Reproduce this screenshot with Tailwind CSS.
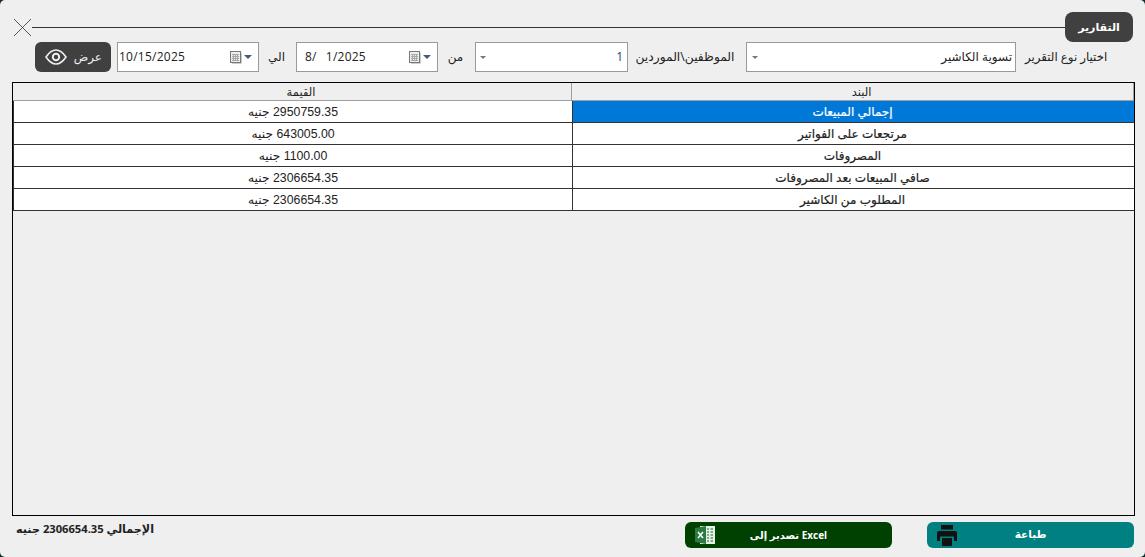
<!DOCTYPE html>
<html lang="ar">
<head>
    <meta charset="UTF-8">
    <title>التقارير</title>
    <script src="https://cdn.jsdelivr.net/npm/@tailwindcss/browser@4"></script>
</head>
<body class="overflow-hidden bg-[#0b2a2a]">
<div class="w-[1145px] h-[557px] rounded-[5px] bg-[#efefef] flex flex-col pt-3 font-['Open_Sans','DejaVu_Sans',sans-serif] text-[#222]">

    <!-- title -->
    <div class="h-[30px] flex items-start pl-[13px] pr-3">
        <svg class="w-[19px] h-[19px] mt-[6px] shrink-0" viewBox="0 0 19 19" fill="none" stroke="#444" stroke-width="0.9"><path d="M1 1 L18 18 M18 1 L1 18"/></svg>
        <div class="flex-1 h-px mt-[15px] bg-[#333]"></div>
        <div dir="rtl" class="w-[68px] h-[30px] rounded-lg bg-[#404040] text-white text-[11px] font-bold flex items-center justify-center">التقارير</div>
    </div>

    <!-- filters -->
    <div class="h-[30px] flex items-center pl-[35px] text-[12px]">
        <button dir="rtl" class="w-[76px] h-[30px] rounded-md bg-[#404040] text-[#eee] text-[12px] flex items-center justify-between pr-[9px] pl-[10px]">
            <span>عرض</span>
            <svg class="w-[22px] h-[16px]" viewBox="0 0 22 16" fill="none" stroke="#eee"><path stroke-width="1.6" d="M1 8 C5 2 8 1 11 1 C14 1 17 2 21 8 C17 14 14 15 11 15 C8 15 5 14 1 8 Z"/><circle cx="11" cy="8" r="3.2" stroke-width="2"/></svg>
        </button>
        <div class="ml-[6px] w-[142px] h-[30px] bg-white border border-[#9a9a9a] flex items-center pl-[1px] pr-[6px] text-[12px] tracking-[0.25px]">
            <span class="flex-1">10/15/2025</span>
            <svg class="w-[12px] h-[13px]" viewBox="0 0 12 13"><path d="M2 12.5h9.5V2" fill="none" stroke="#ccc"/><rect x="0.5" y="0.5" width="10" height="11" fill="#eee" stroke="#777"/><path d="M2 3.5h7M2 5.5h7M2 7.5h7M2 9.5h7M3.5 3v7M5.5 3v7M7.5 3v7" stroke="#a8a8a8"/></svg>
            <span class="ml-[2px] w-0 h-0 border-x-[4px] border-x-transparent border-t-[4px] border-t-[#4a5a75]"></span>
        </div>
        <span dir="rtl" class="w-[37px] text-center pr-[2px]">الي</span>
        <div class="w-[142px] h-[30px] bg-white border border-[#9a9a9a] flex items-center pl-[8px] pr-[6px] text-[12px] tracking-[0.25px]">
            <span class="flex-1 flex gap-[9px]"><span>8/</span><span>1/2025</span></span>
            <svg class="w-[12px] h-[13px]" viewBox="0 0 12 13"><path d="M2 12.5h9.5V2" fill="none" stroke="#ccc"/><rect x="0.5" y="0.5" width="10" height="11" fill="#eee" stroke="#777"/><path d="M2 3.5h7M2 5.5h7M2 7.5h7M2 9.5h7M3.5 3v7M5.5 3v7M7.5 3v7" stroke="#a8a8a8"/></svg>
            <span class="ml-[2px] w-0 h-0 border-x-[4px] border-x-transparent border-t-[4px] border-t-[#4a5a75]"></span>
        </div>
        <span dir="rtl" class="w-[37px] text-center pr-[2px]">من</span>
        <div class="w-[153px] h-[30px] bg-white border border-[#9a9a9a] flex items-center pl-[4px] pr-[4px]">
            <span class="w-0 h-0 border-x-[3px] border-x-transparent border-t-[3px] border-t-[#777]"></span>
            <span class="flex-1 text-right text-[#1a3a6e]">1</span>
        </div>
        <span dir="rtl" class="w-[118px] text-center pr-[4px] text-[12.3px]">الموظفين\الموردين</span>
        <div class="w-[270px] h-[30px] bg-white border border-[#9a9a9a] flex items-center pl-[5px] pr-[3px]">
            <span class="w-0 h-0 border-x-[3px] border-x-transparent border-t-[3px] border-t-[#777]"></span>
            <span dir="rtl" class="flex-1">تسوية الكاشير</span>
        </div>
        <span dir="rtl" class="ml-[9px] text-[11.8px]">اختيار نوع التقرير</span>
    </div>

    <!-- table -->
    <div class="mt-[10px] ml-3 w-[1123px] h-[434px] border border-black">
        <div class="h-[18px] flex border-b border-[#a0a0a0] text-[11.5px] leading-[18px] text-center">
            <div class="w-[559px] pl-[18px] border-r border-[#a0a0a0]">القيمة</div>
            <div class="flex-1 pl-[18px] border-r border-[#a0a0a0]">البند</div>
        </div>
        <div class="bg-white border-l border-[#333] font-['Liberation_Sans','DejaVu_Sans',sans-serif]">
            <div class="h-[22px] flex border-b border-[#333] leading-[23px] text-center">
                <div dir="rtl" class="w-[559px] text-[12.3px] border-r border-[#333]">2950759.35 جنيه</div>
                <div dir="rtl" class="flex-1 pr-[2px] text-[12px] [-webkit-text-stroke:0.2px_#fff] bg-[#0078d7] text-white">إجمالي المبيعات</div>
            </div>
            <div class="h-[22px] flex border-b border-[#333] leading-[23px] text-center">
                <div dir="rtl" class="w-[559px] text-[12.3px] border-r border-[#333]">643005.00 جنيه</div>
                <div dir="rtl" class="flex-1 pr-[2px] text-[12px] [-webkit-text-stroke:0.2px_#222]">مرتجعات على الفواتير</div>
            </div>
            <div class="h-[22px] flex border-b border-[#333] leading-[23px] text-center">
                <div dir="rtl" class="w-[559px] text-[12.3px] border-r border-[#333]">1100.00 جنيه</div>
                <div dir="rtl" class="flex-1 pr-[2px] text-[12px] [-webkit-text-stroke:0.2px_#222]">المصروفات</div>
            </div>
            <div class="h-[22px] flex border-b border-[#333] leading-[23px] text-center">
                <div dir="rtl" class="w-[559px] text-[12.3px] border-r border-[#333]">2306654.35 جنيه</div>
                <div dir="rtl" class="flex-1 pr-[2px] text-[12px] [-webkit-text-stroke:0.2px_#222]">صافي المبيعات بعد المصروفات</div>
            </div>
            <div class="h-[22px] flex border-b border-[#333] leading-[23px] text-center">
                <div dir="rtl" class="w-[559px] text-[12.3px] border-r border-[#333]">2306654.35 جنيه</div>
                <div dir="rtl" class="flex-1 pr-[2px] text-[12px] [-webkit-text-stroke:0.2px_#222]">المطلوب من الكاشير</div>
            </div>
        </div>
    </div>

    <!-- footer -->
    <div class="mt-[6px] h-[26px] flex items-start pl-[16px] text-[11.2px] font-bold">
        <div dir="rtl" class="w-[669px] text-left leading-[14px]"><span>الإجمالي 2306654.35 جنيه</span></div>
        <button dir="rtl" class="w-[207px] h-[26px] rounded-md bg-[#004000] text-white text-[10px] font-bold flex items-center justify-center relative">
            Excel تصدير إلى
            <svg class="absolute left-[10px] top-[3px] w-[20px] h-[20px]" viewBox="0 0 20 20"><rect x="5" y="1" width="15" height="18" fill="#e8efe8"/><path d="M12 4h2M15.5 4h2.5M12 7h2M15.5 7h2.5M12 10h2M15.5 10h2.5M12 13h2M15.5 13h2.5M12 16h2M15.5 16h2.5" stroke="#5a9a6e" stroke-width="1.5"/><path d="M0 3 L11 1 V19 L0 17 Z" fill="#2a7a42"/><path d="M3 7 L8 13 M8 7 L3 13" stroke="#fff" stroke-width="1.5"/></svg>
        </button>
        <button dir="rtl" class="ml-[35px] w-[207px] h-[26px] rounded-md bg-[#008080] text-white text-[10.5px] font-bold flex items-center justify-center relative">
            طباعة
            <svg class="absolute left-[10px] top-[3px] w-[20px] h-[21px]" viewBox="0 0 20 21" fill="#111"><path d="M4 0h12v4.5H4z"/><path d="M2 6h16a2 2 0 0 1 2 2v8h-3v-4.5H3V16H0V8a2 2 0 0 1 2-2z"/><path d="M5 13h10v8H5z"/></svg>
        </button>
    </div>
</div>
</body>
</html>
